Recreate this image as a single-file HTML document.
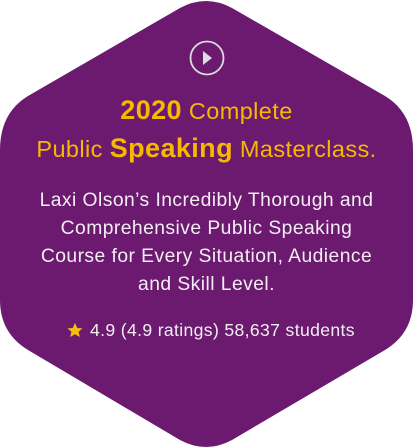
<!DOCTYPE html><html><head><style>
html,body{margin:0;padding:0;width:413px;height:448px;background:#fff;overflow:hidden}
.w{position:relative;width:413px;height:448px;font-family:"Liberation Sans",sans-serif}
svg{position:absolute;left:0;top:0}
.t{position:absolute;left:0;width:413px;text-align:center;white-space:nowrap}
.h{color:#f7b900;font-size:23.5px;line-height:37px;top:92px;letter-spacing:0.4px}
.h b{font-size:27px}
.d{color:#f4eef4;font-size:19.3px;line-height:28px;top:187px;letter-spacing:0.45px}
.r{color:#f4eef4;font-size:17.6px;top:320px;left:90px;width:auto;text-align:left;letter-spacing:0.35px}
</style></head><body><div class="w">
<svg width="413" height="448"><path d="M180 8 Q206 -6 232 8 L385 96 Q413 113 413 150 L413 300 Q413 333 385 350 L232 440 Q206 454 180 440 L28 350 Q0 333 0 300 L0 150 Q0 113 28 96 Z" fill="#6b1a6f"/>
<circle cx="207" cy="58" r="16.5" fill="none" stroke="#ddd" stroke-width="1.8"/>
<path d="M203 51 L212 58 L203 65 Z" fill="#ddd"/>
<path d="M75 323 L77.3 328 L82.5 328.4 L78.6 331.8 L79.8 337 L75 334.2 L70.2 337 L71.4 331.8 L67.5 328.4 L72.7 328 Z" fill="#f5bd12"/></svg>
<div class="t h"><b>2020</b> Complete<br>Public <b>Speaking</b> Masterclass.</div>
<div class="t d">Laxi Olson’s Incredibly Thorough and<br>Comprehensive Public Speaking<br>Course for Every Situation, Audience<br>and Skill Level.</div>
<div class="t r">4.9 (4.9 ratings) 58,637 students</div>
</div></body></html>
